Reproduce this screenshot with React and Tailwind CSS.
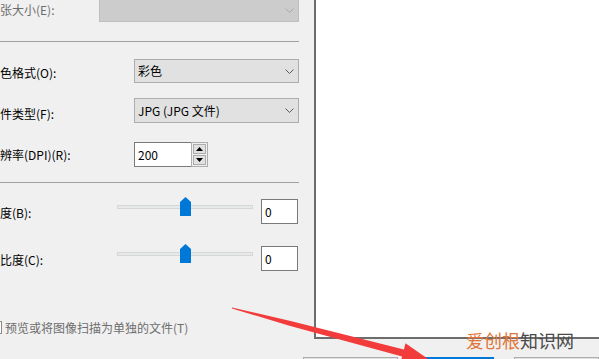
import React from "react";

const Chevron = ({ color = "#5a5a5a" }) => (
  <svg width="9" height="5" viewBox="0 0 9 5" className="shrink-0">
    <polyline points="0.5,0.5 4.5,4.5 8.5,0.5" fill="none" stroke={color} strokeWidth="1" />
  </svg>
);

const Select = ({ value, width, disabled }) => (
  <div
    className={
      disabled
        ? "flex h-full items-center justify-end border border-[#bfbfbf] bg-[#cccccc] pr-[4px]"
        : "flex h-full items-center justify-between border border-[#adadad] bg-[#e1e1e1] pl-[3px] pr-[4px]"
    }
    style={{ width }}
  >
    {value && <span className="text-[12px] leading-[14px] text-black">{value}</span>}
    <Chevron color={disabled ? "#a8a8a8" : "#5a5a5a"} />
  </div>
);

const Slider = () => (
  <div className="relative mt-[-2px] flex h-[19px] w-[136px] shrink-0 flex-col">
    <div className="mt-[8px] h-[4px] w-full border border-[#d6d6d6] bg-[#e7eaea]" />
    {/* thumb sits over the track */}
    <svg width="11" height="19" viewBox="0 0 11 19" className="absolute left-[63px] top-0">
      <polygon points="0,5 5.5,0 11,5 11,19 0,19" fill="#0078d7" />
    </svg>
  </div>
);

const ValueBox = () => (
  <div className="ml-[8px] flex h-[25px] w-[37px] shrink-0 items-center border border-[#7a7a7a] bg-white pl-[3px] text-[12px] leading-[14px] text-black">
    0
  </div>
);

export default function App() {
  return (
    <div className="relative h-[359px] w-[599px] overflow-hidden bg-[#f0f0f0] font-['Noto_Sans_CJK_SC',sans-serif] text-[12px] text-black">
      <div className="flex h-[339px]">
        {/* left settings column */}
        <div className="flex w-[314px] shrink-0 flex-col">
          <div className="mt-[-2px] flex h-[24px] items-center">
            <span className="w-[99px] shrink-0 leading-[12px] text-[#6d6d6d]">张大小(E):</span>
            <Select width={200} disabled />
          </div>

          <div className="mt-[19px] h-px w-[299px] bg-[#a0a0a0]" />

          <div className="mt-[17px] flex h-[24px] items-center">
            <span className="w-[134px] shrink-0 pt-[3px] leading-[12px]">色格式(O):</span>
            <Select width={165} value="彩色" />
          </div>

          <div className="mt-[15px] flex h-[25px] items-center">
            <span className="w-[134px] shrink-0 pt-[6px] leading-[12px]">件类型(F):</span>
            <Select width={165} value="JPG (JPG 文件)" />
          </div>

          <div className="mt-[19px] flex h-[25px] items-center">
            <span className="w-[134px] shrink-0 leading-[12px]">辨率(DPI)(R):</span>
            <div className="flex h-[25px] w-[57px] items-center border border-r-0 border-[#7a7a7a] bg-white pl-[3px] leading-[14px]">
              200
            </div>
            <div className="flex h-[25px] w-[17px] flex-col gap-px border border-[#adadad] bg-[#f0f0f0] p-px">
              <div className="flex flex-1 items-center justify-center border border-[#adadad] bg-[#e1e1e1]">
                <svg width="7" height="4" viewBox="0 0 7 4">
                  <polygon points="0,4 3.5,0 7,4" fill="#000" />
                </svg>
              </div>
              <div className="flex flex-1 items-center justify-center border border-[#adadad] bg-[#e1e1e1]">
                <svg width="7" height="4" viewBox="0 0 7 4">
                  <polygon points="0,0 3.5,4 7,0" fill="#000" />
                </svg>
              </div>
            </div>
          </div>

          <div className="mt-[15px] h-px w-[299px] bg-[#a0a0a0]" />

          <div className="mt-[16px] flex h-[25px] items-start">
            <span className="mt-[8px] w-[117px] shrink-0 leading-[12px]">度(B):</span>
            <Slider />
            <ValueBox />
          </div>

          <div className="mt-[22px] flex h-[25px] items-start">
            <span className="mt-[8px] w-[117px] shrink-0 leading-[12px]">比度(C):</span>
            <Slider />
            <ValueBox />
          </div>

          <div className="mt-[50px] flex h-[13px] items-center">
            <div className="ml-[-11px] h-[13px] w-[13px] shrink-0 border border-[#8a8a8a] bg-white" />
            <span className="ml-[3px] leading-[12px] text-[#6d6d6d]">预览或将图像扫描为单独的文件(T)</span>
          </div>
        </div>

        {/* preview area */}
        <div className="h-[339px] flex-1 border-b-2 border-l-2 border-[#6d6d6d] bg-white" />
      </div>

      {/* bottom buttons */}
      <div className="mt-[18px] flex pl-[303px]">
        <div className="h-[23px] w-[100px] border border-[#adadad] bg-[#e1e1e1]" />
        <div className="ml-[20px] h-[23px] w-[80px] border border-[#0078d7] bg-[#0078d7]" />
        <div className="ml-[20px] h-[23px] w-[90px] border border-[#adadad] bg-[#e1e1e1]" />
      </div>

      {/* watermark */}
      <div className="absolute left-[466px] top-[329px] text-[18px] leading-[22px]">
        <span className="text-[#e0763a]">爱创根</span>
        <span className="text-[#4a4a4a]">知识网</span>
      </div>

      {/* red annotation arrow */}
      <svg className="pointer-events-none absolute left-0 top-0" width="599" height="359" viewBox="0 0 599 359">
        <polygon
          points="232,307.5 290.6,320.9 403.9,349.6 405.5,343.3 431,361 400.5,362.7 402.1,356.4 289.4,325.7 232,308.5"
          fill="#f23c3c"
        />
      </svg>
    </div>
  );
}
